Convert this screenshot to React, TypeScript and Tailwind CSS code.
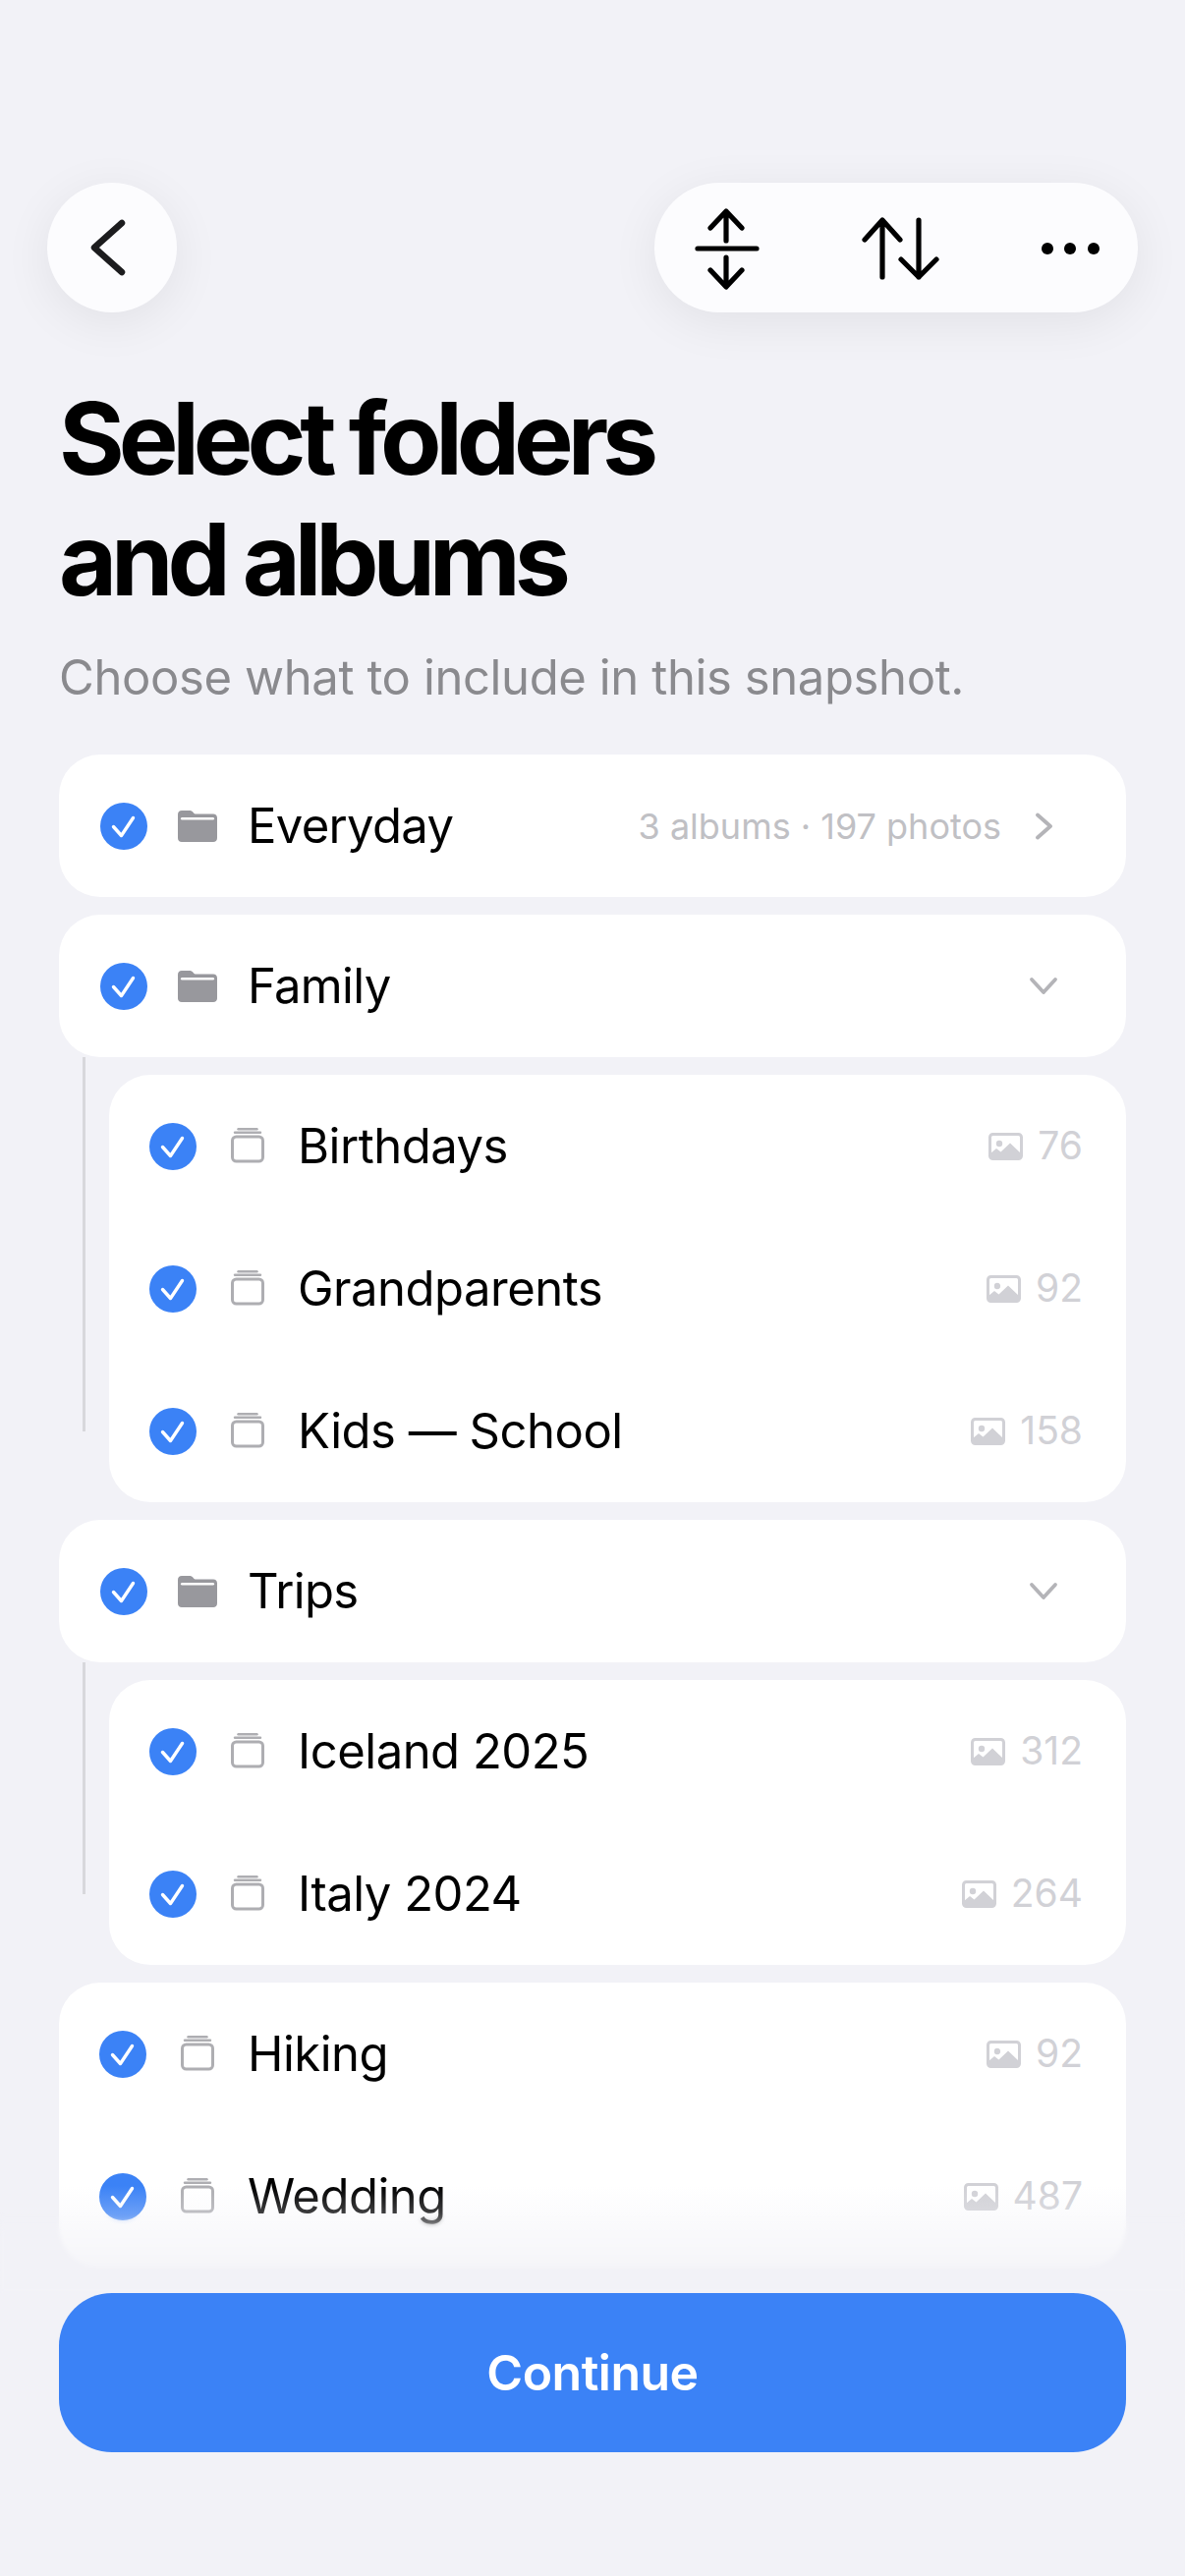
import React from "react";

const Check = () => (
  <div className="w-[48px] h-[48px] rounded-full bg-[#3b82f6] flex items-center justify-center shrink-0">
    <svg width="48" height="48" viewBox="0 0 48 48" fill="none" stroke="#fff" strokeWidth="3.4" strokeLinecap="round" strokeLinejoin="round">
      <path d="M13.5 24.5 L21.5 33.5 L33.5 15.5" />
    </svg>
  </div>
);

const FolderIcon = () => (
  <svg width="40" height="34" viewBox="0 0 40 34" className="shrink-0">
    <path d="M4 1h7.5c2 0 3 .6 4.2 2 .8 1 1.6 1.5 3 1.5H36c2.4 0 4 1.6 4 4V29c0 2.6-1.6 4-4 4H4c-2.4 0-4-1.4-4-4V5c0-2.6 1.6-4 4-4z" fill="#98989d" />
    <rect x="3" y="8" width="34" height="2.6" rx="1.3" fill="#fff" />
  </svg>
);

const StackIcon = () => (
  <svg width="40" height="38" viewBox="0 0 40 38" fill="none" className="shrink-0">
    <path d="M10.5 1.2h19" stroke="#aeaeb2" strokeWidth="2.4" strokeLinecap="round" />
    <path d="M7 4.8h26" stroke="#aeaeb2" strokeWidth="2.4" strokeLinecap="round" />
    <rect x="4.5" y="9" width="31" height="25" rx="4" stroke="#aeaeb2" strokeWidth="3" />
  </svg>
);

const ImageIcon = () => (
  <svg width="35" height="28" viewBox="0 0 35 28" className="shrink-0" fill="none">
    <rect x="1.5" y="1.5" width="32" height="25" rx="3" stroke="#d1d1d6" strokeWidth="3" />
    <circle cx="11" cy="11" r="3.2" fill="#d1d1d6" />
    <path d="M2 21 L8 16 L12.5 19.5 L22 10.5 L33 21 V26 H2 Z" fill="#d1d1d6" />
  </svg>
);

const ChevronRight = () => (
  <svg width="30" height="28" viewBox="0 0 30 28" fill="none" stroke="#b4b4b8" strokeWidth="3.8" strokeLinecap="round" strokeLinejoin="round" className="shrink-0">
    <path d="M9 2.5 L22 14 L9 25.5" />
  </svg>
);

const ChevronDown = () => (
  <svg width="30" height="20" viewBox="0 0 30 20" fill="none" stroke="#b4b4b8" strokeWidth="3.8" strokeLinecap="round" strokeLinejoin="round" className="shrink-0">
    <path d="M3 3 L15 16 L27 3" />
  </svg>
);

const FolderRow = ({ name, meta, open }: { name: string; meta?: string; open?: boolean }) => (
  <div className="h-[145px] rounded-[42px] bg-white flex items-center pl-[42px] pr-[69px]">
    <Check />
    <div className="ml-[31px]"><FolderIcon /></div>
    <span className="ml-[31px] text-[49px] tracking-[-0.014em] text-black flex-1">{name}</span>
    {meta && <span className="text-[36px] text-[#c0c0c4] mr-[28px]">{meta}</span>}
    {open ? <ChevronDown /> : <ChevronRight />}
  </div>
);

const AlbumRow = ({ name, count }: { name: string; count: number }) => (
  <div className="h-[145px] flex items-center pl-[41px] pr-[44px]">
    <Check />
    <div className="ml-[32px]"><StackIcon /></div>
    <span className="ml-[31px] text-[49px] tracking-[-0.01em] text-black flex-1">{name}</span>
    <ImageIcon />
    <span className="ml-[15px] text-[39px] text-[#d1d1d6]">{count}</span>
  </div>
);

const Children = ({ rows, lineHeight }: { rows: [string, number][]; lineHeight: string }) => (
  <div className="flex">
    <div className={`ml-[24px] w-[3px] bg-[#d8d8dc] ${lineHeight}`} />
    <div className="ml-[24px] mt-[18px] flex-1 rounded-[42px] bg-white">
      {rows.map(([n, c]) => (
        <AlbumRow key={n} name={n} count={c} />
      ))}
    </div>
  </div>
);

export default function App() {
  return (
    <div className="relative w-[1206px] h-[2622px] overflow-hidden bg-[#f2f2f7] font-['Inter',sans-serif]">
      <div className="pt-[186px] px-[48px] flex justify-between">
        <button className="w-[132px] h-[132px] rounded-full bg-[#fcfcfe] shadow-[0_10px_50px_rgba(0,0,0,0.07)] flex items-center justify-center">
          <svg width="132" height="132" viewBox="0 0 132 132" fill="none" stroke="#1c1c1e" strokeWidth="6.5" strokeLinecap="round" strokeLinejoin="round">
            <path d="M76 41 L48 66 L76 91" />
          </svg>
        </button>
        <div className="w-[492px] h-[132px] rounded-full bg-[#fcfcfe] shadow-[0_10px_50px_rgba(0,0,0,0.07)]">
          <svg width="492" height="132" viewBox="0 0 492 132" fill="none" stroke="#000" strokeWidth="5.2" strokeLinecap="round" strokeLinejoin="round">
            <path d="M44 67 H104 M73 59 V30 M57 46 L73 29 L89 46 M73 76 V105 M57 89 L73 106 L89 89" />
            <path d="M232 96 V38 M214 58 L232 38 L250 58 M269 38 V96 M251 78 L269 96 L287 78" />
            <circle cx="400" cy="67" r="6" fill="#000" stroke="none" />
            <circle cx="423" cy="67" r="6" fill="#000" stroke="none" />
            <circle cx="447" cy="67" r="6" fill="#000" stroke="none" />
          </svg>
        </div>
      </div>

      <div className="px-[60px]">
        <h1 className="mt-[67px] text-[102px] leading-[123px] font-bold tracking-[-0.06em] text-black">
          Select folders
          <br />
          and albums
        </h1>
        <p className="mt-[29px] text-[49px] leading-[60px] tracking-[-0.008em] text-[#8a8a8e]">Choose what to include in this snapshot.</p>

        <div className="mt-[48px] flex flex-col">
          <FolderRow name="Everyday" meta="3 albums · 197 photos" />
          <div className="mt-[18px]"><FolderRow name="Family" open /></div>
          <Children
            lineHeight="h-[381px]"
            rows={[["Birthdays", 76], ["Grandparents", 92], ["Kids — School", 158]]}
          />
          <div className="mt-[18px]"><FolderRow name="Trips" open /></div>
          <Children lineHeight="h-[236px]" rows={[["Iceland 2025", 312], ["Italy 2024", 264]]} />
          <div className="mt-[18px] rounded-[42px] bg-white">
            <AlbumRow name="Hiking" count={92} />
            <AlbumRow name="Wedding" count={487} />
          </div>
        </div>
      </div>

      <div className="absolute left-0 right-0 top-[2225px] h-[109px] bg-gradient-to-b from-[#f2f2f700] to-[#f2f2f7]" />
      <div className="absolute left-0 right-0 top-[2252px] h-[82px] backdrop-blur-[2px] [mask-image:linear-gradient(to_bottom,transparent,black_30%)]" />

      <div className="absolute left-[60px] right-[60px] top-[2334px] h-[162px] rounded-[54px] bg-[#3b82f6] flex items-center justify-center">
        <span className="text-[50px] font-semibold tracking-[-0.01em] text-white">Continue</span>
      </div>
    </div>
  );
}
